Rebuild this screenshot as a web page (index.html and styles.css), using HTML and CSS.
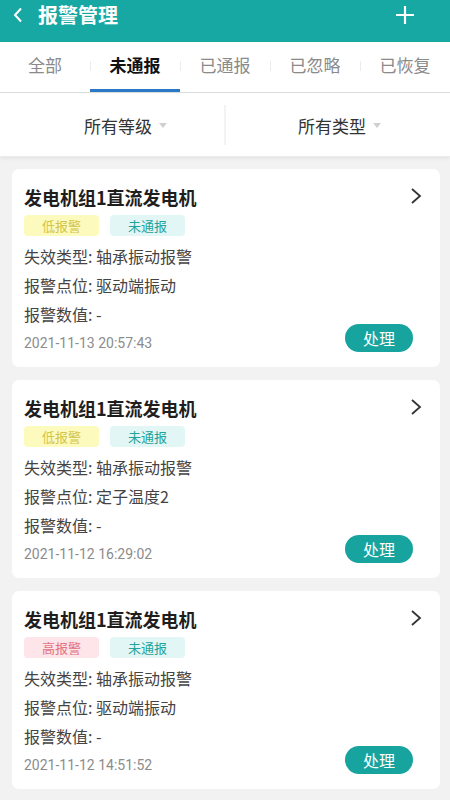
FILE: index.html
```html
<!DOCTYPE html>
<html lang="zh">
<head>
<meta charset="utf-8">
<link rel="stylesheet" href="styles.css">
</head>
<body>
<header class="appbar">
  <svg class="back" width="12" height="16" viewBox="0 0 12 16"><path d="M9 1.5 L3 8 L9 14.5" fill="none" stroke="#fff" stroke-width="2"/></svg>
  <h1 class="title">报警管理</h1>
  <svg class="plus" width="20" height="20" viewBox="0 0 20 20"><path d="M10 1 V19 M1 10 H19" stroke="#fff" stroke-width="2.2"/></svg>
</header>
<nav class="tabs">
  <div class="tab">全部</div>
  <div class="tab active">未通报</div>
  <div class="tab">已通报</div>
  <div class="tab">已忽略</div>
  <div class="tab">已恢复</div>
</nav>
<div class="filters">
  <div class="filter first">所有等级<span class="caret"></span></div>
  <div class="fdiv"></div>
  <div class="filter second">所有类型<span class="caret"></span></div>
</div>
<main class="list">
  <section class="card">
    <div class="card-head"><span class="name">发电机组1直流发电机</span><svg class="chev" width="12" height="18" viewBox="0 0 12 18"><path d="M2 2 L10 9 L2 16" fill="none" stroke="#333" stroke-width="1.8"/></svg></div>
    <div class="tags"><span class="tag low">低报警</span><span class="tag status">未通报</span></div>
    <div class="info">失效类型: 轴承振动报警</div>
    <div class="info">报警点位: 驱动端振动</div>
    <div class="info">报警数值: -</div>
    <div class="foot"><span class="date">2021-11-13 20:57:43</span><button class="btn">处理</button></div>
  </section>
  <section class="card">
    <div class="card-head"><span class="name">发电机组1直流发电机</span><svg class="chev" width="12" height="18" viewBox="0 0 12 18"><path d="M2 2 L10 9 L2 16" fill="none" stroke="#333" stroke-width="1.8"/></svg></div>
    <div class="tags"><span class="tag low">低报警</span><span class="tag status">未通报</span></div>
    <div class="info">失效类型: 轴承振动报警</div>
    <div class="info">报警点位: 定子温度2</div>
    <div class="info">报警数值: -</div>
    <div class="foot"><span class="date">2021-11-12 16:29:02</span><button class="btn">处理</button></div>
  </section>
  <section class="card">
    <div class="card-head"><span class="name">发电机组1直流发电机</span><svg class="chev" width="12" height="18" viewBox="0 0 12 18"><path d="M2 2 L10 9 L2 16" fill="none" stroke="#333" stroke-width="1.8"/></svg></div>
    <div class="tags"><span class="tag high">高报警</span><span class="tag status">未通报</span></div>
    <div class="info">失效类型: 轴承振动报警</div>
    <div class="info">报警点位: 驱动端振动</div>
    <div class="info">报警数值: -</div>
    <div class="foot"><span class="date">2021-11-12 14:51:52</span><button class="btn">处理</button></div>
  </section>
</main>
</body>
</html>
```

FILE: styles.css
```css
* { box-sizing: border-box; }
html, body { margin: 0; padding: 0; }
body {
  width: 450px;
  height: 800px;
  overflow: hidden;
  background: #f2f2f3;
  font-family: "Noto Sans CJK SC", "Noto Sans", Roboto, sans-serif;
  color: #333;
}
.appbar {
  height: 42px;
  background: #17a8a4;
  display: flex;
  align-items: center;
  padding: 0 0 12px 12px;
}
.back { margin-right: 14px; }
.title {
  margin: 0;
  font-size: 20px;
  font-weight: 700;
  color: #fff;
  line-height: 28px;
  flex: 1;
}
.plus { margin-right: 35px; }
.tabs {
  height: 51px;
  background: #fff;
  display: flex;
  border-bottom: 1px solid #dcdcdc;
}
.tab {
  width: 90px;
  display: flex;
  align-items: center;
  justify-content: center;
  font-size: 17px;
  color: #8a8a8a;
  position: relative;
  padding-bottom: 5px;
}
.tab + .tab::before {
  content: "";
  position: absolute;
  left: 0;
  top: 19px;
  width: 1px;
  height: 10px;
  background: #ececec;
}
.tab.active {
  color: #111;
  font-weight: 700;
  border-bottom: 3px solid #2b78c6;
  padding-bottom: 2px;
}
.filters {
  height: 64px;
  background: #fff;
  display: flex;
  align-items: center;
  box-shadow: 0 2px 3px rgba(0,0,0,0.05);
  border-bottom: 1px solid #ececec;
  margin-bottom: 12px;
}
.filter {
  width: 224px;
  flex: none;
  display: flex;
  align-items: center;
  justify-content: center;
  font-size: 17px;
  color: #333;
  padding-top: 2px;
}
.filter.first { padding-left: 27px; }
.filter.second { padding-left: 3px; }
.caret {
  margin-left: 7px;
  width: 0;
  height: 0;
  border-left: 4px solid transparent;
  border-right: 4px solid transparent;
  border-top: 5px solid #d0d0d0;
}
.fdiv {
  width: 2px;
  height: 40px;
  background: #f3f3f3;
}
.list { padding: 0 10px 0 12px; }
.card {
  background: #fff;
  border-radius: 7px;
  padding: 14px 20px 18px 12px;
  margin-bottom: 13px;
  height: 198px;
}
.card-head {
  display: flex;
  align-items: center;
  justify-content: space-between;
  height: 26px;
  margin-top: 1px;
}
.name {
  font-size: 18px;
  font-weight: 700;
  color: #1e1e1e;
  line-height: 26px;
}
.chev { margin-right: -2px; margin-top: -2px; }
.tags {
  display: flex;
  gap: 11px;
  margin-top: 5px;
  margin-bottom: 6px;
}
.tag {
  width: 75px;
  height: 21px;
  border-radius: 4px;
  font-size: 13px;
  line-height: 21px;
  text-align: center;
}
.tag.low { background: #fdfabd; color: #d2c44a; }
.tag.high { background: #fde5ea; color: #e2707f; }
.tag.status { background: #e2f6f5; color: #22a39c; }
.info {
  font-size: 16px;
  line-height: 29px;
  color: #444;
}
.foot {
  display: flex;
  justify-content: space-between;
  align-items: flex-end;
  margin-top: -5px;
}
.date {
  font-size: 14px;
  color: #8c8c8c;
  line-height: 18px;
  font-family: Roboto, "Noto Sans", sans-serif;
}
.btn {
  width: 68px;
  height: 28px;
  border: none;
  border-radius: 14px;
  background: #17a39e;
  color: #fff;
  font-family: "Noto Sans CJK SC", sans-serif;
  font-size: 16px;
  line-height: 28px;
  padding: 0;
  margin-right: 7px;
}
```
